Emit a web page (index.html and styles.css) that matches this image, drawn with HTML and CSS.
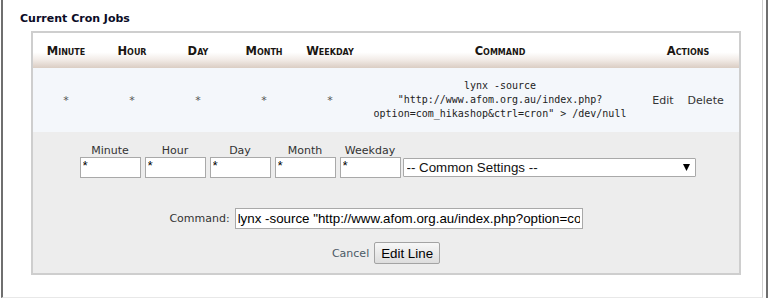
FILE: index.html
```html
<!DOCTYPE html>
<html>
<head>
    <meta charset="utf-8">
    <link rel="stylesheet" href="styles.css">
</head>
<body>

<div class="frame">
    <h3 class="title">Current Cron Jobs</h3>

    <table class="cron">
        <tr class="head">
            <th class="c-time">Minute</th>
            <th class="c-time">Hour</th>
            <th class="c-time">Day</th>
            <th class="c-time">Month</th>
            <th class="c-time">Weekday</th>
            <th class="c-cmd">Command</th>
            <th class="c-act">Actions</th>
        </tr>
        <tr class="job">
            <td>*</td>
            <td>*</td>
            <td>*</td>
            <td>*</td>
            <td>*</td>
            <td class="cmd">lynx -source<br>"http://www.afom.org.au/index.php?<br>option=com_hikashop&amp;ctrl=cron" &gt; /dev/null</td>
            <td class="actions"><a href="#">Edit</a><a href="#">Delete</a></td>
        </tr>
        <tr class="edit">
            <td colspan="7">
                <form class="editform">
                    <div class="fields">
                        <label class="field"><span>Minute</span><input type="text" value="*"></label>
                        <label class="field"><span>Hour</span><input type="text" value="*"></label>
                        <label class="field"><span>Day</span><input type="text" value="*"></label>
                        <label class="field"><span>Month</span><input type="text" value="*"></label>
                        <label class="field"><span>Weekday</span><input type="text" value="*"></label>
                        <div class="selectwrap">
                            <select class="common">
                                <option>-- Common Settings --</option>
                            </select>
                            <svg class="arrow" width="7" height="7" viewBox="0 0 7 7"><path d="M0 0H7L3.5 7Z" fill="#000"/></svg>
                        </div>
                    </div>
                    <div class="cmdrow">
                        <label>Command:</label>
                        <input type="text" class="cmdinput" value='lynx -source "http://www.afom.org.au/index.php?option=com_hikashop&amp;ctrl=cron" &gt; /dev/null'>
                    </div>
                    <div class="buttons">
                        <a href="#" class="cancel">Cancel</a>
                        <input type="submit" value="Edit Line" onclick="return false">
                    </div>
                </form>
            </td>
        </tr>
    </table>
</div>
<div class="edge"></div>

</body>
</html>
```

FILE: styles.css
```css
* {
    box-sizing: border-box;
}

body {
    margin: 0;
    display: flex;
    background: #fff;
    font-family: 'DejaVu Sans', Verdana, sans-serif;
    font-size: 11px;
    color: #333;
}

.frame {
    margin-left: 1px;
    width: 762px;
    height: 298px;
    border-left: 2px solid #6f6f6f;
    border-right: 1px solid #cfcfcf;
    border-bottom: 1px solid #e8e8e8;
    padding: 12px 21px 0 17px;
    overflow: hidden;
}

.edge {
    margin-left: 3px;
    width: 2px;
    height: 298px;
    background: #6f6f6f;
}

.title {
    margin: 0 0 6px 0;
    font-size: 11px;
    line-height: 13px;
    font-weight: bold;
    color: #0b0b26;
}

.cron {
    margin-left: 11px;
    width: 710px;
    border: 2px solid #cecece;
    border-collapse: separate;
    border-spacing: 0;
    table-layout: fixed;
}

.cron th, .cron td {
    padding: 0;
    text-align: center;
}

.head {
    height: 35px;
    background: linear-gradient(#fff 55%, #f3ede9 75%, #dacdc3);
}

.head th {
    font-size: 11.5px;
    font-weight: bold;
    font-variant: small-caps;
    color: #1a1612;
    padding-top: 1px;
}

.c-time {
    width: 66px;
}

.c-cmd {
    width: 274px;
}

.job {
    height: 64px;
    background: #f4f7fb;
}

.job td {
    color: #555;
}

.job .cmd {
    font-family: 'DejaVu Sans Mono', monospace;
    font-size: 10px;
    line-height: 14px;
    color: #222;
}

.actions a {
    color: #333;
    text-decoration: none;
    margin: 0 7px;
}

.edit {
    background: #ededed;
}

.editform {
    display: flex;
    flex-direction: column;
    align-items: center;
    padding: 12px 0 9px 0;
}

.fields {
    display: flex;
    align-items: flex-end;
    gap: 4px;
    padding-left: 3px;
}

.field {
    display: flex;
    flex-direction: column;
    align-items: center;
    line-height: 13px;
    color: #333;
}

input[type=text] {
    font-family: 'Liberation Sans', Arial, sans-serif;
    font-size: 13.33px;
    color: #000;
    border: 1px solid #a9a9a9;
    background: #fff;
    padding: 1px 2px;
    margin: 0;
    outline: none;
}

.field input {
    width: 61px;
    height: 21px;
    padding-top: 0;
    padding-bottom: 4px;
}

.selectwrap {
    position: relative;
    margin: 0 0 1px -2px;
}

.common {
    appearance: none;
    -webkit-appearance: none;
    width: 293px;
    height: 19px;
    border: 1px solid #a9a9a9;
    border-radius: 1px;
    background: #fff;
    font-family: 'Liberation Sans', Arial, sans-serif;
    font-size: 13.33px;
    color: #111;
    padding: 0 3px;
    margin: 0;
}

.arrow {
    position: absolute;
    right: 6px;
    top: 6px;
}

.cmdrow {
    display: flex;
    align-items: center;
    gap: 5px;
    margin-top: 30px;
    padding-right: 20px;
    color: #333;
}

.cmdinput {
    width: 348px;
    height: 21px;
}

.buttons {
    display: flex;
    align-items: center;
    gap: 5px;
    margin-top: 13px;
}

.cancel {
    color: #4b5a66;
    text-decoration: none;
}

input[type=submit] {
    font-family: 'Liberation Sans', Arial, sans-serif;
    font-size: 13.33px;
    color: #000;
    height: 22px;
    padding: 0 6px;
    margin: 0;
    border: 1px solid #a3a3a3;
    border-radius: 2px;
    background: linear-gradient(#f7f7f7, #dddddd);
}
```
